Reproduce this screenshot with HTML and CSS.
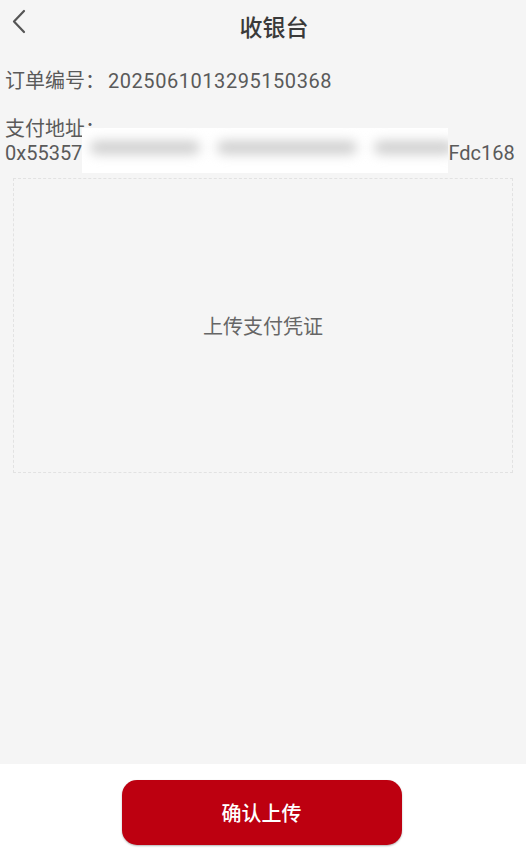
FILE: index.html
```html
<!DOCTYPE html>
<html lang="zh-CN">
<head>
    <meta charset="UTF-8">
    <meta name="viewport" content="width=device-width, initial-scale=1.0">
    <title>收银台</title>
    <link rel="stylesheet" href="styles.css">
</head>
<body>

    <div class="page">
        <!-- Header -->
        <div class="header">
            <a class="back" href="#">
                <svg width="16" height="26" viewBox="0 0 16 26">
                    <path d="M13 2 L3 12.5 L13 23" fill="none" stroke="#555" stroke-width="2.2" stroke-linecap="round" stroke-linejoin="round"/>
                </svg>
            </a>
            <h1>收银台</h1>
        </div>

        <!-- Order info -->
        <div class="info">
            <p class="row">订单编号：<span class="num">2025061013295150368</span></p>
            <div class="address">
                <p class="label">支付地址：</p>
                <p class="addr">
                    <span>0x55357</span>
                    <span class="mask">
                        <i class="smear s1"></i>
                        <i class="smear s2"></i>
                        <i class="smear s3"></i>
                    </span>
                    <span>Fdc168</span>
                </p>
            </div>
        </div>

        <!-- Upload area -->
        <div class="upload">上传支付凭证</div>
    </div>

    <div class="footer">
        <button class="confirm">确认上传</button>
    </div>

</body>
</html>
```

FILE: styles.css
```css
body {
    margin: 0;
    font-family: Roboto, "Noto Sans CJK SC", sans-serif;
    background-color: #f5f5f5;
    color: #5a5a5a;
}

.page {
    height: 764px;
    display: flex;
    flex-direction: column;
}

.header {
    height: 52px;
    display: flex;
    align-items: center;
    justify-content: center;
    position: relative;
}

.back {
    position: absolute;
    left: 11px;
    top: 9px;
}

.header h1 {
    margin: 0;
    font-size: 23px;
    font-weight: 500;
    color: #3a3a3a;
    padding-left: 22px;
}

.info {
    padding: 17px 0 0 5px;
    font-size: 20px;
    line-height: 24px;
}

.info p {
    margin: 0;
}

.row .num {
    margin-left: 3px;
    letter-spacing: 0.55px;
}

.address {
    margin-top: 24px;
}

.addr {
    display: flex;
    align-items: center;
}

.mask {
    width: 366px;
    height: 45px;
    margin: -13px 0 -8px 0;
    background: #fff;
    position: relative;
    overflow: hidden;
}

.smear {
    position: absolute;
    top: 13px;
    height: 13px;
    background: #cdcdcd;
    border-radius: 7px;
    filter: blur(6px);
}

.s1 { left: 8px; width: 110px; }
.s2 { left: 135px; width: 140px; }
.s3 { left: 292px; width: 80px; }

.upload {
    margin: 13px 13px 0 13px;
    height: 293px;
    border: 1px dashed #e2e2e2;
    display: flex;
    align-items: center;
    justify-content: center;
    font-size: 20px;
    color: #666;
}

.footer {
    height: 87px;
    background: #fff;
    display: flex;
    justify-content: center;
    padding-top: 16px;
    box-sizing: border-box;
}

.confirm {
    font-family: inherit;
    width: 280px;
    height: 65px;
    margin-left: -3px;
    border: none;
    border-radius: 15px;
    background: #bd0010;
    color: #fff;
    font-size: 20px;
    font-weight: 500;
    box-shadow: 0 1px 2px rgba(0, 0, 0, 0.3);
}
```
